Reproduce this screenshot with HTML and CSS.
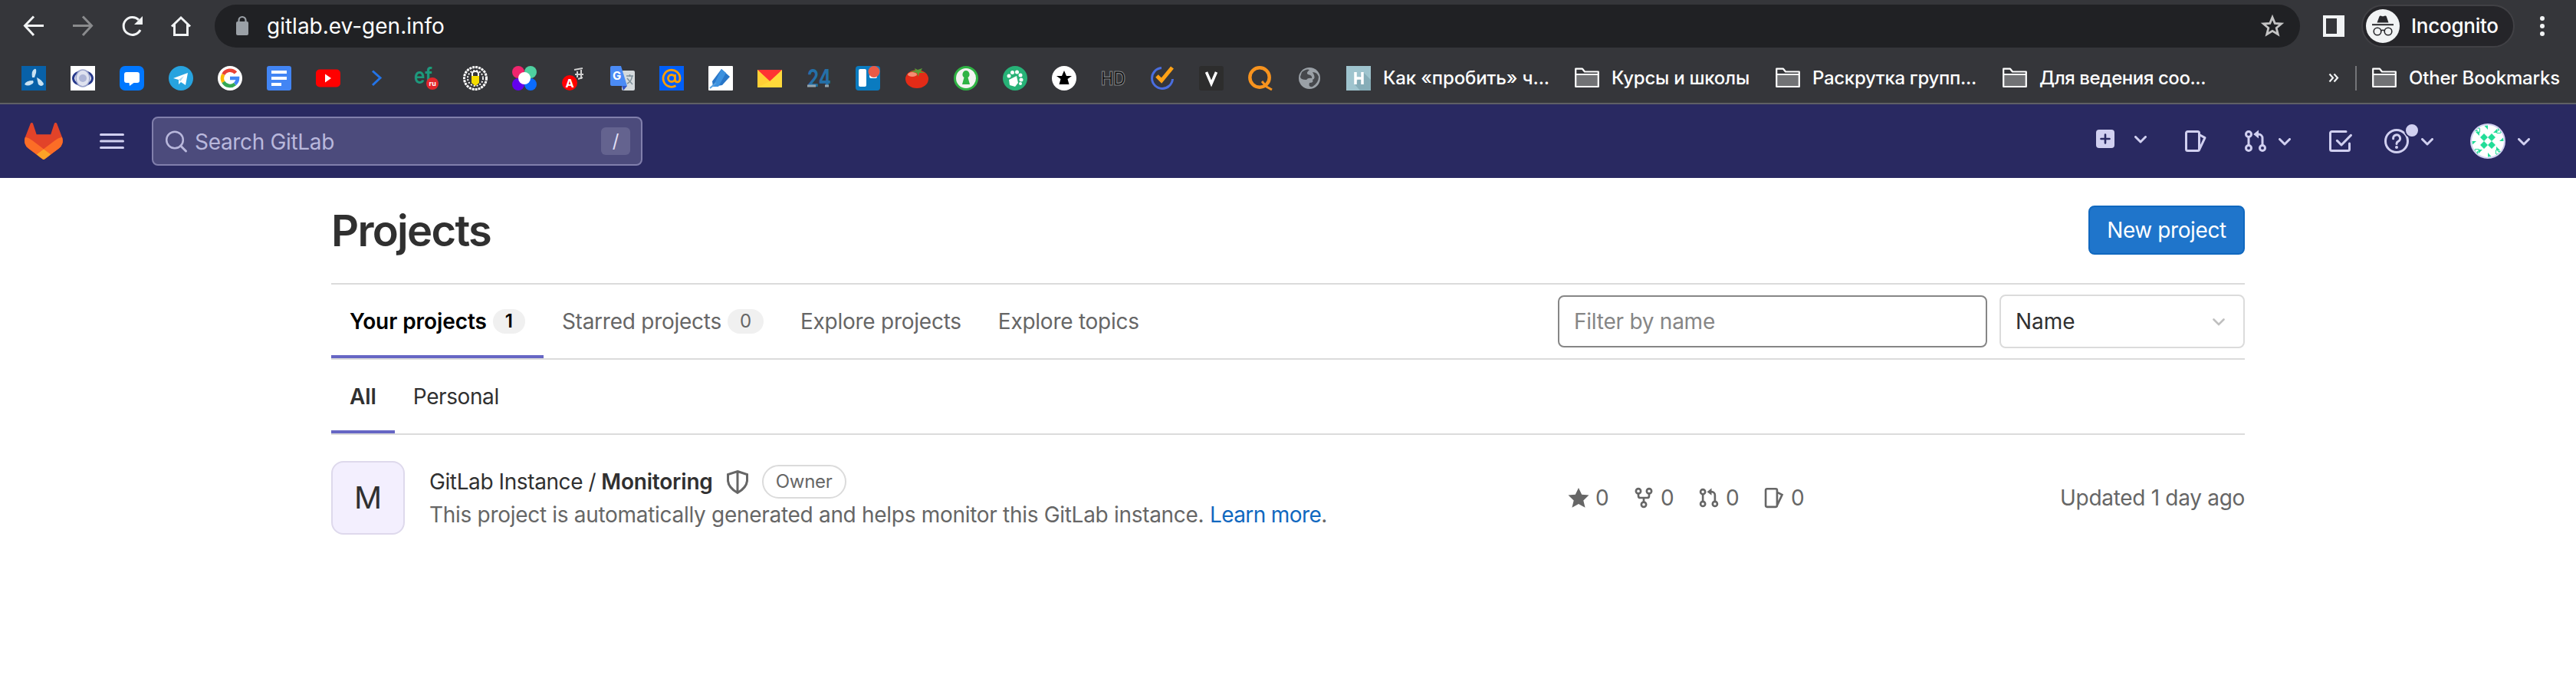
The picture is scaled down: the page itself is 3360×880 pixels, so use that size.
FILE: index.html
```html
<!DOCTYPE html>
<html lang="en">
<head>
<meta charset="utf-8">
<title>Projects · GitLab</title>
<link rel="stylesheet" href="styles.css">
</head>
<body>
<header class="browser">
  <div class="toolbar">
    <div class="toolbar-buttons">
      <svg class="icon" viewBox="0 0 32 32"><path d="M29 15.500H5M16 3.500L4.500 15.500L16 28" class="line-white"/></svg>
      <svg class="icon dim" viewBox="0 0 32 32"><path d="M3 15.500H27M16 3.500L27.500 15.500L16 28" class="line-white"/></svg>
      <svg class="icon" viewBox="0 0 32 32"><path d="M27 21A11.500 11.500 0 1 1 25 8" class="line-white"/><path d="M30 3V14H19Z" fill="#f1f3f4"/></svg>
      <svg class="icon" viewBox="0 0 32 32"><path d="M4 16.500L16 5L28 16.500M7.500 14V27.500H24.500V14" class="line-white"/></svg>
    </div>
    <div class="omnibox">
      <svg class="icon" viewBox="0 0 32 32"><rect x="8" y="11" width="16" height="18" rx="2" transform="translate(0 -1)" fill="#9aa0a6"/><path d="M11.500 12V8.500A4.500 4.500 0 0 1 20.500 8.500V12" fill="none" stroke="#9aa0a6" stroke-width="2.200"/></svg>
      <span class="url">gitlab.ev-gen.info</span>
      <svg class="icon" viewBox="0 0 32 32"><path d="M16 4.500L19.200 12.400L27.700 13L21.200 18.500L23.300 26.800L16 22.300L8.700 26.800L10.800 18.500L4.300 13L12.800 12.400Z" fill="none" stroke="#c4c4c4" stroke-width="2.800"/></svg>
    </div>
    <svg class="icon side-panel" viewBox="0 0 32 32"><path d="M2 2H30V30H2ZM6 6V26H20V6Z" fill="#f1f3f4" fill-rule="evenodd"/></svg>
    <div class="incognito">
      <svg class="incognito-icon" viewBox="0 0 44 44"><circle cx="22" cy="22" r="22" fill="#f1f3f4"/><path d="M14.500 17.500L17.500 9.500Q18.500 8 20 8.800Q22 9.800 24 8.800Q26 8 26.800 9.500L29.500 17.500Z" fill="#28282c"/><path d="M8 20.200H36" stroke="#28282c" stroke-width="2"/><circle cx="15" cy="29" r="4.800" class="spec"/><circle cx="29" cy="29" r="4.800" class="spec"/><path d="M19.500 28Q22 26.500 24.500 28" class="spec"/></svg>
      <span class="incognito-label">Incognito</span>
    </div>
    <svg class="icon menu-dots" viewBox="0 0 32 32" fill="#f1f3f4"><circle cx="16" cy="6" r="3"/><circle cx="16" cy="16" r="3"/><circle cx="16" cy="26" r="3"/></svg>
  </div>
  <nav class="bookmarks">
    <div class="favicons">
      <svg class="icon" viewBox="0 0 32 32"><rect width="32" height="32" fill="#0861a8"/><g fill="#c9e2f2"><path d="M14 15Q12.500 6 17 4Q20 3 19 9L17 15Z"/><path d="M4 24Q6 19 15 19Q17 22 13 24Q8 27 4 24Z"/><path d="M20 15Q28 19 29 24Q26 28 22 24Q21 20 20 15Z"/></g></svg>
      <svg class="icon" viewBox="0 0 32 32"><rect width="32" height="32" fill="#fff"/><ellipse cx="16" cy="16" rx="12.500" ry="9" fill="none" stroke="#26388b" stroke-width="3"/><ellipse cx="16" cy="16" rx="9" ry="11" fill="#dfe2ef" stroke="#9aa3cb" stroke-width="1.500"/><circle cx="16" cy="16" r="5" fill="#aeb5d6"/></svg>
      <svg class="icon" viewBox="0 0 32 32"><rect width="32" height="32" rx="7" fill="#07f"/><path d="M9 8H23Q26 8 26 11V19Q26 22 23 22H18.500L13 26L12.500 22H9Q6 22 6 19V11Q6 8 9 8Z" fill="#fff"/></svg>
      <svg class="icon" viewBox="0 0 32 32"><circle cx="16" cy="16" r="16" fill="#27a3df"/><path d="M6 16L25 9L22 25L16 21L13 24V18Z" fill="#fff"/><path d="M13 18L20 13L15.500 20Z" fill="#aad8f0"/></svg>
      <svg class="icon" viewBox="0 0 32 32"><circle cx="16" cy="16" r="16" fill="#fff"/><g fill="none" stroke-width="4.500"><path d="M23.500 9A10 10 0 0 0 7.300 11" stroke="#ea4335"/><path d="M7.300 11A10 10 0 0 0 7.300 21" stroke="#fbbc05"/><path d="M7.300 21A10 10 0 0 0 22.500 23.500" stroke="#34a853"/><path d="M22.500 23.500A10 10 0 0 0 26 16H16" stroke="#4285f4"/></g></svg>
      <svg class="icon" viewBox="0 0 32 32"><rect width="32" height="32" rx="3" fill="#4285f4"/><path d="M6 6H26V10H6ZM6 14H26V18H6ZM6 22H19V26H6Z" fill="#fff"/></svg>
      <svg class="icon" viewBox="0 0 32 32"><rect y="4.500" width="32" height="23" rx="5" fill="#f00"/><path d="M12 10.500L20 16L12 21.500Z" fill="#fff"/></svg>
      <svg class="icon" viewBox="0 0 32 32"><path d="M10 6.500L20 15.500L10 25" fill="none" stroke="#2374e8" stroke-width="3"/></svg>
      <svg class="icon" viewBox="0 0 32 32"><text x="0" y="23" class="glyph glyph-ef" textLength="24" lengthAdjust="spacingAndGlyphs">ef</text><circle cx="24" cy="23" r="8" fill="#e3262b"/><text x="19.500" y="26" class="glyph glyph-small">ru</text></svg>
      <svg class="icon" viewBox="0 0 32 32"><circle cx="16" cy="16" r="14.500" fill="#35363a" stroke="#fff" stroke-width="3" stroke-dasharray="3 1"/><circle cx="16" cy="16" r="10" fill="none" stroke="#fff" stroke-width="2" stroke-dasharray="2 2"/><path d="M12 13V10Q12 7 16 7T20 10V13" fill="none" stroke="#fff" stroke-width="2"/><path d="M11 13H21V22L16 26L11 22Z" fill="#f5dc00"/></svg>
      <svg class="icon" viewBox="0 0 32 32"><circle cx="8" cy="8" r="8" fill="#f0256d"/><circle cx="24" cy="8" r="8" fill="#4fd0a0"/><circle cx="8" cy="24" r="8" fill="#6200ee"/><circle cx="24" cy="24" r="8" fill="#0a6bff"/><circle cx="16" cy="16" r="8" fill="#fff"/></svg>
      <svg class="icon" viewBox="0 0 32 32"><circle cx="11" cy="22" r="10" fill="#f00"/><text x="5.500" y="27.500" class="glyph glyph-a">A</text><path d="M17 5L28 3M21 7V15M26 5V17M18 11H29M22 17L28 15" stroke="#d0d0d0" stroke-width="2"/></svg>
      <svg class="icon" viewBox="0 0 32 32"><rect x="15" y="6" width="17" height="26" rx="2" fill="#d5dadd"/><path d="M0 2Q0 0 2 0H14L22 26H2Q0 26 0 24Z" fill="#4b8bf5"/><path d="M15 26H22L17 32Z" fill="#3456c4"/><text x="3" y="18" class="glyph glyph-g">G</text><path d="M21 13H30M25.500 11V14M22 23Q28 20 28.500 13M22 16L29 24" stroke="#7d8f99" stroke-width="1.500" fill="none"/></svg>
      <svg class="icon" viewBox="0 0 32 32"><rect width="32" height="32" fill="#005ff9"/><circle cx="16" cy="16" r="4.500" class="at"/><path d="M20.500 11V17.500Q20.500 21 23.500 21Q27 21 27 16A11 11 0 1 0 21.500 25.800" class="at"/></svg>
      <svg class="icon" viewBox="0 0 32 32"><rect width="32" height="32" rx="1" fill="#fff"/><path d="M17 4L28 14L18 25L6 27L5 20Z" fill="#2876c8"/><path d="M17 4L23 9L13 27L6 27Z" fill="#3c91df"/><path d="M2 29L10 22" stroke="#57a0df" stroke-width="2"/></svg>
      <svg class="icon" viewBox="0 0 32 32"><rect y="5" width="32" height="23" fill="#ffd93b"/><path d="M0 5H32L16 20Z" fill="#f33"/><path d="M0 5L16 20L0 28Z" fill="#ffcf35"/></svg>
      <svg class="icon" viewBox="0 0 32 32"><text x="1" y="27" class="glyph glyph-24" textLength="31" lengthAdjust="spacingAndGlyphs">24</text><path d="M1 26H12M24 26H29" stroke="#95a5ad" stroke-width="3"/></svg>
      <svg class="icon" viewBox="0 0 32 32"><rect width="32" height="32" rx="4" fill="#0a7bc0"/><rect x="4" y="4" width="10" height="23" rx="2" fill="#fff"/><rect x="18" y="4" width="10" height="12" rx="2" fill="#fff"/><circle cx="24" cy="7.500" r="7.500" fill="#eb5a46"/></svg>
      <svg class="icon" viewBox="0 0 32 32"><ellipse cx="16" cy="17" rx="15" ry="12" fill="#e32b17"/><ellipse cx="10" cy="11" rx="6" ry="3" fill="#f58d72"/><path d="M16 9L7 7L14 6L13 3L17 5L23 3L21 7L27 9L19 9L18 14Z" fill="#5b9b35"/></svg>
      <svg class="icon" viewBox="0 0 32 32"><circle cx="16" cy="16" r="14.500" fill="#f3f3f1" stroke="#2fb344" stroke-width="3"/><path d="M16 6A5 5 0 0 1 18.500 15L21 24H11L13.500 15A5 5 0 0 1 16 6Z" fill="#2fb344"/></svg>
      <svg class="icon" viewBox="0 0 32 32"><circle cx="16" cy="16" r="16" fill="#27b277"/><g fill="#fff"><path d="M8 18L18 13L20 22L16 27L9 25Z"/><circle cx="8" cy="13" r="2.500"/><circle cx="12.500" cy="8.500" r="2.500"/><circle cx="18.500" cy="8" r="2.500"/><circle cx="23" cy="12" r="2.500"/><circle cx="24" cy="18" r="2.500"/><circle cx="23" cy="23" r="2"/></g></svg>
      <svg class="icon" viewBox="0 0 32 32"><circle cx="16" cy="16" r="16" fill="#fff"/><path d="M16 6L19 13H26L20.500 17L22.500 24H9.500L11.500 17L6 13H13Z" fill="#000"/></svg>
      <svg class="icon" viewBox="0 0 32 32"><text x="0" y="24.500" class="glyph glyph-hd" textLength="32" lengthAdjust="spacingAndGlyphs">HD</text></svg>
      <svg class="icon" viewBox="0 0 32 32"><path d="M15 2.500A13.500 13.500 0 1 0 29.500 17" fill="none" stroke="#4a6ee0" stroke-width="3"/><path d="M9 13L15 19L29 2" fill="none" stroke="#ffa216" stroke-width="5"/></svg>
      <svg class="icon" viewBox="0 0 32 32"><rect width="32" height="32" rx="3" fill="#2d2d2d"/><path d="M9.500 8L16 23L22.500 8" fill="none" stroke="#fff" stroke-width="3.500"/></svg>
      <svg class="icon" viewBox="0 0 32 32"><circle cx="15" cy="15" r="12.700" fill="none" stroke="#f7931e" stroke-width="4.500"/><path d="M18 20L24 27L31 31" fill="none" stroke="#f7931e" stroke-width="3"/></svg>
      <svg class="icon" viewBox="0 0 32 32"><circle cx="16" cy="16" r="14" fill="#9aa0a6"/><path d="M6 8Q12 3 16 5Q11 9 14 11Q20 12 19 16Q14 15 12 18Q4 18 4 14ZM20 8Q26 8 28 14Q28 22 20 27Q14 28 16 22Q22 22 20 18Q25 16 20 8Z" fill="#46484c"/></svg>
    </div>
    <a class="bookmark b1"><svg class="icon" viewBox="0 0 32 32"><rect width="32" height="32" fill="#9fc4ce"/><path d="M11 24L22 8L32 18V32H18Z" fill="#86adb8"/><path d="M12 8V24M21 8V24M12 16H21" stroke="#fff" stroke-width="3.500"/></svg><span>Как «пробить» ч...</span></a>
    <a class="bookmark b2"><svg class="icon" viewBox="0 0 32 32"><use href="#folder"/></svg><span>Курсы и школы</span></a>
    <a class="bookmark b3"><svg class="icon" viewBox="0 0 32 32"><use href="#folder"/></svg><span>Раскрутка групп...</span></a>
    <a class="bookmark b4"><svg class="icon" viewBox="0 0 32 32"><use href="#folder"/></svg><span>Для ведения соо...</span></a>
    <div class="bookmarks-end">
      <svg class="overflow" viewBox="0 0 14 14"><path d="M1.500 1.500L6 6.500L1.500 11.500M7.500 1.500L12 6.500L7.500 11.500" fill="none" stroke="#f1f3f4" stroke-width="2.200"/></svg>
      <span class="divider"></span>
      <a class="bookmark other"><svg class="icon" viewBox="0 0 32 32"><use href="#folder"/></svg><span>Other Bookmarks</span></a>
    </div>
  </nav>
</header>

<header class="navbar">
  <svg class="logo" viewBox="0 0 25 24"><path d="m24.507 9.500-.034-.09L21.082.562a.896.896 0 0 0-1.694.091l-2.290 7.010H7.825L5.535.653a.898.898 0 0 0-1.694-.09L.451 9.411.416 9.500a6.297 6.297 0 0 0 2.090 7.278l.012.010.030.022 5.160 3.867 2.560 1.935 1.554 1.176a1.051 1.051 0 0 0 1.268 0l1.555-1.176 2.560-1.935 5.197-3.890.014-.010A6.297 6.297 0 0 0 24.507 9.500Z" fill="#E24329"/><path d="m24.507 9.500-.034-.09a11.440 11.440 0 0 0-4.560 2.051l-7.447 5.632 4.742 3.584 5.197-3.890.014-.010A6.297 6.297 0 0 0 24.507 9.500Z" fill="#FC6D26"/><path d="m7.707 20.677 2.560 1.935 1.555 1.176a1.051 1.051 0 0 0 1.268 0l1.555-1.176 2.560-1.935-4.743-3.584-4.755 3.584Z" fill="#FCA326"/><path d="M5.010 11.461a11.430 11.430 0 0 0-4.560-2.050L.416 9.500a6.297 6.297 0 0 0 2.090 7.278l.012.010.030.022 5.160 3.867 4.745-3.584-7.444-5.632Z" fill="#FC6D26"/></svg>
  <svg class="icon hamburger" viewBox="0 0 32 32"><path d="M1.500 7.500H30.500M1.500 16H30.500M1.500 24.500H30.500" class="nav-line"/></svg>
  <div class="search">
    <svg class="icon" viewBox="0 0 32 32"><circle cx="14" cy="14.500" r="10.800" fill="none" stroke="#b9b8dc" stroke-width="2.500"/><path d="M21.500 22L28.500 29" stroke="#b9b8dc" stroke-width="3" stroke-linecap="round"/></svg>
    <span class="search-text">Search GitLab</span>
    <kbd class="search-key">/</kbd>
  </div>
  <div class="nav-actions">
    <svg class="plus" viewBox="0 0 24 24"><rect width="24" height="24" rx="4" fill="#d1d0f0"/><path d="M12 6.500V17.500M6.500 12H17.500" stroke="#292961" stroke-width="2.600" stroke-linecap="round"/></svg>
    <svg class="chevron plus-chevron" viewBox="0 0 16 10"><path d="M1.500 1.500L8 8L14.500 1.500" class="nav-line"/></svg>
    <svg class="icon nav-issues" viewBox="0 0 16 16"><path d="M2.750 1.750H9.250A1 1 0 0 1 10.250 2.750V13.250A1 1 0 0 1 9.250 14.250H2.750A1 1 0 0 1 1.750 13.250V2.750A1 1 0 0 1 2.750 1.750ZM10.500 3.900L14 5.800L10.200 13.800" class="nav-line-16"/></svg>
    <svg class="icon nav-mr" viewBox="0 0 16 16"><use href="#merge"/></svg>
    <svg class="chevron" viewBox="0 0 16 10"><path d="M1.500 1.500L8 8L14.500 1.500" class="nav-line"/></svg>
    <svg class="icon nav-todo" viewBox="0 0 16 16"><path d="M12 1.750H2.750A1 1 0 0 0 1.750 2.750V13.250A1 1 0 0 0 2.750 14.250H13.250A1 1 0 0 0 14.250 13.250V9.500M6.200 7.700L9 10.500L15.200 4.200" class="nav-line-16"/></svg>
    <div class="help">
      <svg class="icon" viewBox="0 0 16 16"><circle cx="8" cy="8" r="7.250" class="nav-line-16"/><path d="M5.800 6.400A2.250 2.250 0 1 1 9 8.200Q8 8.700 8 9.700" class="nav-line-16"/><circle cx="8" cy="12" r="1" fill="#d1d0f0"/></svg>
      <span class="dot"></span>
    </div>
    <svg class="chevron help-chevron" viewBox="0 0 16 10"><path d="M1.500 1.500L8 8L14.500 1.500" class="nav-line"/></svg>
    <svg class="user" viewBox="0 0 46 46"><circle cx="23" cy="23" r="22" fill="#fff" stroke="#d1d0f0" stroke-width="2"/><g fill="#23dd98"><path d="M18 13L23 18L18 23L13 18ZM28 13L33 18L28 23L23 18ZM18 23L23 28L18 33L13 28ZM28 23L33 28L28 33L23 28Z"/><path id="tooth" d="M18.500 3L23 2.500V8ZM36 6L41 12H35ZM30 12L35 7V12ZM38 8L34 13H40Z"/><use href="#tooth" transform="rotate(90 23 23)"/><use href="#tooth" transform="rotate(180 23 23)"/><use href="#tooth" transform="rotate(270 23 23)"/></g></svg>
    <svg class="chevron help-chevron" viewBox="0 0 16 10"><path d="M1.500 1.500L8 8L14.500 1.500" class="nav-line"/></svg>
  </div>
</header>

<main class="content">
  <div class="page-header">
    <h1 class="title">Projects</h1>
    <a class="button">New project</a>
  </div>
  <div class="tabs primary">
    <a class="tab active"><span>Your projects</span><span class="badge">1</span></a>
    <a class="tab"><span>Starred projects</span><span class="badge">0</span></a>
    <a class="tab">Explore projects</a>
    <a class="tab">Explore topics</a>
    <div class="filters">
      <div class="filter-input">Filter by name</div>
      <div class="filter-select"><span>Name</span><svg class="chevron" viewBox="0 0 16 10"><path d="M1.500 1.500L8 8L14.500 1.500" fill="none" stroke="#bfbfbf" stroke-width="2.600" stroke-linecap="round"/></svg></div>
    </div>
  </div>
  <div class="tabs secondary">
    <a class="tab active">All</a>
    <a class="tab personal">Personal</a>
  </div>
  <div class="project">
    <div class="avatar">M</div>
    <div class="project-text">
      <div class="project-name">
        <span class="namespace">GitLab Instance /</span>
        <span class="name">Monitoring</span>
        <svg class="icon shield" viewBox="0 0 32 32"><path d="M16 2.500L28.500 6.500V15Q27.500 24 16 30.500Q4.500 24 3.500 15V6.500ZM16 3V30" fill="none" stroke="#666" stroke-width="3"/></svg>
        <span class="owner">Owner</span>
      </div>
      <div class="description">This project is automatically generated and helps monitor this GitLab instance. <span class="more"><a class="link">Learn more</a>.</span></div>
    </div>
    <div class="stats">
      <span class="stat"><svg class="stat-icon" viewBox="0 0 16 16"><path d="M8 .6L10.400 5.500L15.700 6L11.600 10L12.900 15.300L8 12.600L3.100 15.300L4.400 10L.3 6L5.600 5.500Z" fill="#666"/></svg>0</span>
      <span class="stat"><svg class="stat-icon" viewBox="0 0 16 16"><g fill="none" stroke="#666" stroke-width="1.500"><circle cx="4" cy="3" r="1.800"/><circle cx="12" cy="3" r="1.800"/><circle cx="8" cy="13" r="1.800"/><path d="M4 5V6.500Q4 8 5.500 8H10.500Q12 8 12 6.500V5M8 8V11"/></g></svg>0</span>
      <span class="stat"><svg class="stat-icon" viewBox="0 0 16 16"><use href="#merge"/></svg>0</span>
      <span class="stat"><svg class="stat-icon" viewBox="0 0 16 16"><path d="M2.750 1.250H9.250A1 1 0 0 1 10.250 2.250V13.750A1 1 0 0 1 9.250 14.750H2.750A1 1 0 0 1 1.750 13.750V2.250A1 1 0 0 1 2.750 1.250ZM10.500 3.900L14 5.800L10.200 13.800" fill="none" stroke="#666" stroke-width="1.500"/></svg>0</span>
    </div>
    <div class="updated">Updated 1 day ago</div>
  </div>
</main>

<svg class="defs">
  <symbol id="folder" viewBox="0 0 32 32"><path d="M1.200 12H30.800V27.500H1.200Z" fill="#717275"/><path d="M1.200 5V27.500H30.800V8H13L10 4.200H1.200ZM1.200 11.500H30.800" transform="translate(0 -.5)" fill="none" stroke="#fff" stroke-width="2.200" stroke-linejoin="round"/></symbol>
  <symbol id="merge" viewBox="0 0 16 16"><g fill="none" stroke="currentColor" stroke-width="1.500"><circle cx="3.500" cy="3.500" r="1.750"/><circle cx="3.500" cy="12.500" r="1.750"/><circle cx="12.500" cy="12.500" r="1.750"/><path d="M3.500 5.300V10.700M12.500 10.700V6A2.500 2.500 0 0 0 10 3.500H9"/></g><path d="M6.600 3.500L10 .8V6.200Z" fill="currentColor"/></symbol>
</svg>
</body>
</html>
```
FILE: styles.css
```css
* { box-sizing: border-box; }
body { margin: 0; background: #fff; font-family: Inter, "Noto Sans", sans-serif; font-size: 28px; line-height: 40px; letter-spacing: -.25px; color: #303030; width: 3360px; white-space: nowrap; }
svg { display: block; flex: none; }
.defs { position: absolute; width: 0; height: 0; }
.icon { width: 32px; height: 32px; overflow: visible; }
.line-white { fill: none; stroke: #f1f3f4; stroke-width: 3; }
.dim { opacity: .45; }

/* Browser toolbar */
.browser { background: #35363a; color: #f5f5f5; }
.toolbar { display: flex; align-items: center; height: 68px; padding-left: 28px; }
.toolbar-buttons { display: flex; gap: 32px; margin-right: 28px; }
.omnibox { display: flex; align-items: center; width: 2720px; height: 56px; border-radius: 28px; background: #202124; padding: 0 20px; }
.url { flex: 1; padding-left: 16px; color: #fff; letter-spacing: 0; }
.side-panel { margin-left: 28px; }
.incognito { display: flex; align-items: center; width: 200px; height: 56px; margin-left: 20px; padding-left: 4px; border: 2px solid #414145; border-radius: 28px; background: #252529; }
.incognito-icon { width: 44px; height: 44px; }
.spec { fill: none; stroke: #28282c; stroke-width: 1.600; }
.incognito-label { padding-left: 15px; font-size: 26px; font-weight: 500; color: #fff; }
.menu-dots { margin-left: 20px; }

/* Bookmarks bar */
.bookmarks { display: flex; align-items: center; height: 68px; padding: 2px 0 0 28px; border-bottom: 2px solid #5f6064; font-size: 24px; font-weight: 500; color: #fff; }
.favicons { display: flex; gap: 32px; }
.glyph { font-family: Inter, sans-serif; font-weight: 700; fill: #fff; letter-spacing: 0; }
.glyph-ef { font-size: 29px; fill: #1c9a7c; font-weight: 600; }
.glyph-small { font-size: 9px; }
.glyph-a { font-size: 15px; }
.glyph-g { font-size: 15px; }
.glyph-24 { font-size: 31px; fill: #2470a8; }
.glyph-hd { font-size: 24px; font-weight: 600; fill: #0a0a0a; stroke: #7f8184; stroke-width: 1.200; }
.at { fill: none; stroke: #ff9e00; stroke-width: 2.800; }
.bookmark { display: flex; align-items: center; gap: 16px; }
.b1 { width: 298px; margin-left: 32px; letter-spacing: -.13px; }
.b2 { width: 262px; }
.b3 { width: 296px; letter-spacing: -.3px; }
.b4 { width: 264px; letter-spacing: -.42px; }
.other { width: 245px; letter-spacing: -.2px; }
.bookmarks-end { display: flex; align-items: center; margin-left: auto; padding-right: 21px; }
.overflow { width: 14px; height: 14px; margin-right: 21px; }
.divider { width: 2px; height: 32px; margin-right: 20px; background: #747578; }

/* GitLab navigation */
.navbar { display: flex; align-items: center; height: 96px; padding: 0 60px 0 32px; background: #292961; }
.nav-line { fill: none; stroke: #d1d0f0; stroke-width: 3; stroke-linecap: round; stroke-linejoin: round; }
.nav-line-16 { fill: none; stroke: #d1d0f0; stroke-width: 1.500; stroke-linejoin: round; stroke-linecap: round; }
.logo { width: 50px; height: 48px; }
.hamburger { margin-left: 48px; }
.search { display: flex; align-items: center; width: 640px; height: 64px; margin-left: 36px; padding: 0 14px; border: 2px solid #817fac; border-radius: 8px; background: #4c4b7c; color: #b9b8dc; }
.search-text { flex: 1; padding: 1px 0 0 8px; letter-spacing: -.33px; }
.search-key { width: 38px; height: 36px; border-radius: 6px; background: #64638f; color: #e0dff5; font: 24px/36px Inter, sans-serif; text-align: center; }
.nav-actions { display: flex; align-items: center; margin-left: auto; }
.plus { width: 24px; height: 24px; margin: 0 26px 6px 0; }
.chevron { width: 16px; height: 10px; margin-top: 2px; }
.plus-chevron { margin-top: -4px; }
.nav-issues { margin-left: 48px; }
.nav-mr { margin: 0 14px 0 46px; color: #d1d0f0; }
.nav-todo { margin-left: 48px; }
.help { position: relative; margin-left: 42px; }
.dot { position: absolute; left: 26px; top: -8px; width: 20px; height: 20px; border: 2px solid #292961; border-radius: 50%; background: #d1d0f0; }
.help-chevron { margin-left: 16px; }
.user { width: 46px; height: 46px; margin-left: 48px; }

/* Page */
.content { width: 2496px; margin: 0 auto; }
.page-header { display: flex; justify-content: space-between; align-items: flex-start; height: 137px; padding-top: 36px; }
.title { margin: 0; font-size: 56px; line-height: 66px; font-weight: 600; letter-spacing: -1.700px; }
.button { width: 204px; height: 64px; border: 2px solid #1068bf; border-radius: 8px; background: #1f75cb; color: #fff; line-height: 60px; text-align: center; letter-spacing: -.4px; }
.tabs { display: flex; border-bottom: 2px solid #dbdbdb; }
.primary { height: 100px; border-top: 2px solid #dbdbdb; color: #666; }
.secondary { height: 98px; }
.tab { display: flex; align-items: center; padding: 0 24px; }
.tab.active { font-weight: 600; letter-spacing: -.08px; box-shadow: inset 0 -4px #6666c4; }
.personal { letter-spacing: -.4px; }
.primary .active { color: #000; }
.badge { height: 32px; margin-left: 8px; padding: 0 16px; border-radius: 16px; background: #f0f0f0; font-size: 24px; line-height: 32px; }
.filters { display: flex; align-items: center; gap: 16px; margin-left: auto; }
.filter-input { width: 560px; height: 68px; padding-left: 19px; border: 2px solid #868686; border-radius: 8px; line-height: 64px; color: #868686; }
.filter-select { display: flex; align-items: center; justify-content: space-between; width: 320px; height: 70px; padding: 0 24px 0 19px; border: 2px solid #dbdbdb; border-radius: 8px; color: #303030; letter-spacing: 0; }
.project { display: flex; align-items: center; height: 96px; margin-top: 34px; }
.avatar { width: 96px; height: 96px; border: 2px solid #ded9ec; border-radius: 16px; background: #f3effe; font-size: 40px; line-height: 92px; text-align: center; }
.project-text { width: 1485px; margin-left: 32px; }
.project-name { display: flex; align-items: center; height: 44px; }
.namespace { letter-spacing: -.4px; }
.name { margin-left: 7px; font-weight: 600; letter-spacing: -.2px; }
.shield { margin: 0 16px; }
.owner { width: 110px; height: 44px; border: 2px solid #dbdbdb; border-radius: 22px; color: #666; font-size: 24px; line-height: 40px; text-align: center; }
.description { height: 42px; line-height: 42px; letter-spacing: -.3px; color: #666; }
.more { letter-spacing: -.6px; }
.link { color: #1068bf; }
.stats { display: flex; color: #666; }
.stat { display: flex; align-items: center; gap: 8px; width: 85px; }
.stat-icon { width: 28px; height: 28px; }
.updated { margin-left: auto; letter-spacing: -.3px; color: #666; }
```
